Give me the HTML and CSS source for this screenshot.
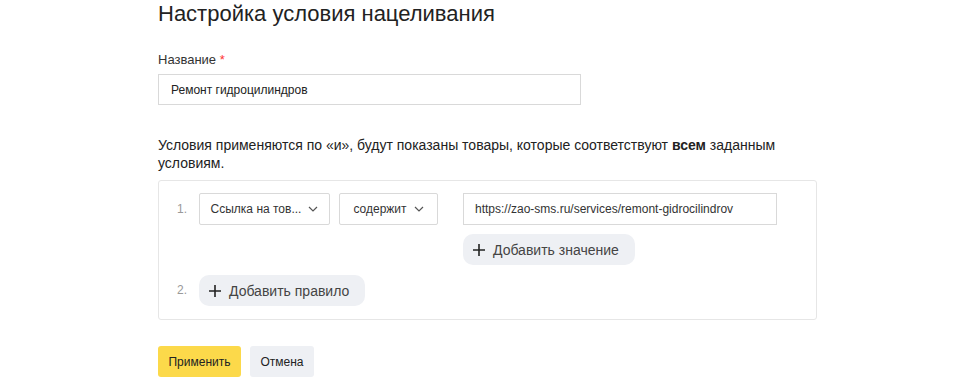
FILE: index.html
```html
<!DOCTYPE html>
<html lang="ru">
<head>
<meta charset="utf-8">
<title>Настройка условия нацеливания</title>
<link rel="stylesheet" href="styles.css">
</head>
<body>
<div class="page">
  <h1 class="title">Настройка условия нацеливания</h1>

  <div class="field">
    <div class="label">Название <span class="req">*</span></div>
    <div class="text-input name-input">Ремонт гидроцилиндров</div>
  </div>

  <p class="hint">Условия применяются по «и», будут показаны товары, которые соответствуют <b>всем</b> заданным условиям.</p>

  <div class="rules">
    <div class="rule">
      <div class="num">1.</div>
      <div class="rule-body">
        <div class="select sel-field">Ссылка на тов...<svg class="chev" viewBox="0 0 10 6" width="10" height="6"><path d="M1 1l4 4 4-4" fill="none" stroke="#555" stroke-width="1.2"/></svg></div>
        <div class="select sel-op">содержит<svg class="chev" viewBox="0 0 10 6" width="10" height="6"><path d="M1 1l4 4 4-4" fill="none" stroke="#555" stroke-width="1.2"/></svg></div>
        <div class="values">
          <div class="text-input url-input">https://zao-sms.ru/services/remont-gidrocilindrov</div>
          <div class="add-btn add-value"><svg class="plus" viewBox="0 0 12 12" width="12" height="12"><path d="M6 0v12M0 6h12" stroke="#222" stroke-width="1.6"/></svg>Добавить значение</div>
        </div>
      </div>
    </div>
    <div class="rule rule-add">
      <div class="num">2.</div>
      <div class="add-btn add-rule"><svg class="plus" viewBox="0 0 12 12" width="12" height="12"><path d="M6 0v12M0 6h12" stroke="#222" stroke-width="1.6"/></svg>Добавить правило</div>
    </div>
  </div>

  <div class="actions">
    <div class="btn btn-primary">Применить</div>
    <div class="btn btn-secondary">Отмена</div>
  </div>
</div>
</body>
</html>
```

FILE: styles.css
```css
* { box-sizing: border-box; }
html, body { margin: 0; padding: 0; background: #fff; }
body {
  font-family: "Liberation Sans", Arial, sans-serif;
  color: #222;
  width: 972px;
  height: 383px;
  overflow: hidden;
}
.page {
  padding: 0 0 0 158px;
}
.title {
  margin: 0;
  padding-top: 1px;
  font-size: 22px;
  line-height: 26px;
  font-weight: normal;
  color: #222;
}
.field {
  margin-top: 25px;
  width: 423px;
}
.label {
  font-size: 13px;
  line-height: 16px;
  color: #333;
}
.req { color: #f33; }
.text-input {
  border: 1px solid #d9d9d9;
  background: #fff;
  font-size: 12px;
  color: #222;
  display: flex;
  align-items: center;
}
.name-input {
  margin-top: 6px;
  height: 31px;
  padding-left: 12px;
}
.hint {
  margin: 31px 0 0 0;
  width: 659px;
  font-size: 14px;
  line-height: 18px;
  color: #222;
}
.hint b { font-weight: bold; }
.rules {
  margin-top: 8px;
  width: 659px;
  border: 1px solid #e6e6e6;
  border-radius: 3px;
  padding: 12px 0 13px 18px;
  display: flex;
  flex-direction: column;
  gap: 10px;
}
.rule {
  display: flex;
  align-items: flex-start;
}
.num {
  width: 22px;
  font-size: 12px;
  color: #999;
  line-height: 32px;
}
.rule-add .num { line-height: 31px; }
.rule-body {
  display: flex;
  align-items: flex-start;
}
.select {
  height: 32px;
  border: 1px solid #d9d9d9;
  border-radius: 2px;
  font-size: 12px;
  color: #333;
  display: flex;
  align-items: center;
  justify-content: center;
  gap: 7px;
}
.chev { display: block; }
.sel-field { width: 131px; }
.sel-op { width: 99px; margin-left: 9px; }
.values {
  margin-left: 25px;
  display: flex;
  flex-direction: column;
  align-items: flex-start;
  gap: 9px;
}
.url-input {
  width: 314px;
  height: 32px;
  padding-left: 11px;
  color: #333;
}
.add-btn {
  height: 31px;
  background: #eef0f4;
  border-radius: 10px;
  font-size: 14px;
  color: #444;
  display: flex;
  align-items: center;
  padding-left: 10px;
  gap: 8px;
}
.add-value { width: 172px; }
.add-rule { width: 166px; }
.plus { display: block; }
.actions {
  margin-top: 26px;
  display: flex;
  gap: 9px;
}
.btn {
  height: 31px;
  border-radius: 3px;
  font-size: 12px;
  color: #222;
  display: flex;
  align-items: center;
  justify-content: center;
}
.btn-primary { width: 83px; background: #fcd94a; }
.btn-secondary { width: 64px; background: #eef0f4; }
```
